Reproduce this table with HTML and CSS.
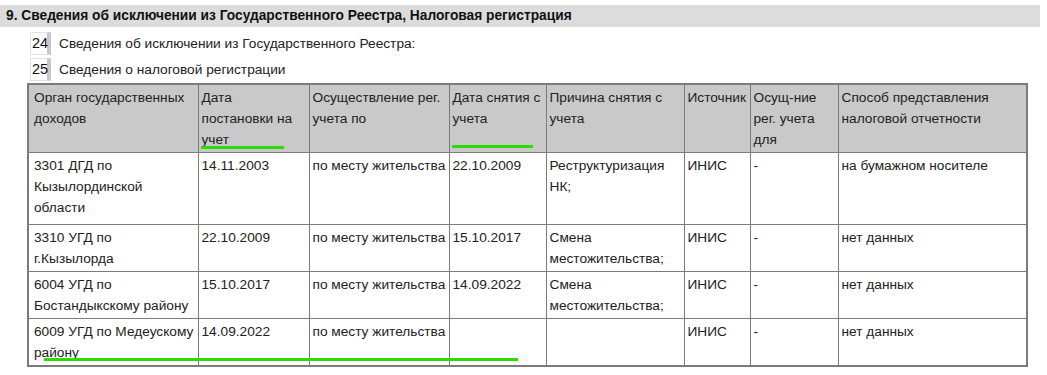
FILE: index.html
```html
<!DOCTYPE html>
<html lang="ru">
<head>
<meta charset="utf-8">
<link rel="stylesheet" href="styles.css">
</head>
<body>
<div class="page">
  <div class="section-title">9. Сведения об исключении из Государственного Реестра, Налоговая регистрация</div>
  <div class="item"><span class="num">24</span><span class="item-text">Сведения об исключении из Государственного Реестра:</span></div>
  <div class="item"><span class="num">25</span><span class="item-text">Сведения о налоговой регистрации</span></div>
  <table class="grid">
    <colgroup>
      <col class="c1"><col class="c2"><col class="c3"><col class="c4"><col class="c5"><col class="c6"><col class="c7"><col class="c8">
    </colgroup>
    <thead>
      <tr>
        <th>Орган государственных доходов</th>
        <th>Дата постановки на учет</th>
        <th>Осуществление рег. учета по</th>
        <th>Дата снятия с учета</th>
        <th>Причина снятия с учета</th>
        <th>Источник</th>
        <th>Осущ-ние рег. учета для</th>
        <th>Способ представления налоговой отчетности</th>
      </tr>
    </thead>
    <tbody>
      <tr class="tall">
        <td>3301 ДГД по Кызылординской области</td>
        <td>14.11.2003</td>
        <td>по месту жительства</td>
        <td>22.10.2009</td>
        <td>Реструктуризация НК;</td>
        <td>ИНИС</td>
        <td>-</td>
        <td>на бумажном носителе</td>
      </tr>
      <tr>
        <td>3310 УГД по г.Кызылорда</td>
        <td>22.10.2009</td>
        <td>по месту жительства</td>
        <td>15.10.2017</td>
        <td>Смена местожительства;</td>
        <td>ИНИС</td>
        <td>-</td>
        <td>нет данных</td>
      </tr>
      <tr>
        <td>6004 УГД по Бостандыкскому району</td>
        <td>15.10.2017</td>
        <td>по месту жительства</td>
        <td>14.09.2022</td>
        <td>Смена местожительства;</td>
        <td>ИНИС</td>
        <td>-</td>
        <td>нет данных</td>
      </tr>
      <tr>
        <td>6009 УГД по Медеускому району</td>
        <td>14.09.2022</td>
        <td>по месту жительства</td>
        <td></td>
        <td></td>
        <td>ИНИС</td>
        <td>-</td>
        <td>нет данных</td>
      </tr>
    </tbody>
  </table>
  <div class="mark mark-1"></div>
  <div class="mark mark-2"></div>
  <div class="mark mark-3"></div>
</div>
</body>
</html>
```

FILE: styles.css
```css
html, body {
  margin: 0;
  padding: 0;
  background: #ffffff;
}

body {
  font-family: "Liberation Sans", Arial, sans-serif;
  font-size: 13.7px;
  color: #222222;
}

.page {
  position: relative;
  padding-top: 5px;
  width: 1047px;
}

.section-title {
  width: 1034px;
  height: 22px;
  line-height: 22px;
  padding-left: 6px;
  background: #dcdcdc;
  font-weight: bold;
  font-size: 13.75px;
  color: #111111;
}

.item {
  display: flex;
  align-items: center;
  margin-left: 30px;
  height: 23px;
  margin-top: 5px;
}

.item + .item {
  margin-top: 3px;
}

.num {
  box-sizing: border-box;
  width: 21px;
  height: 23px;
  line-height: 21px;
  padding-left: 1px;
  border: 1px solid #e2e2e2;
  border-right: 4px solid #c8c8c8;
  font-size: 14.5px;
  color: #111111;
  background: #ffffff;
}

.item-text {
  margin-left: 8px;
  font-size: 13.7px;
  color: #222222;
}

.grid {
  margin-left: 27px;
  margin-top: 2px;
  width: 999px;
  table-layout: fixed;
  border-collapse: collapse;
  border: 2px solid #7b7b7b;
}

.c1 { width: 170px; }
.c2 { width: 111px; }
.c3 { width: 140px; }
.c4 { width: 97px; }
.c5 { width: 138px; }
.c6 { width: 66px; }
.c7 { width: 88px; }
.c8 { width: 189px; }

.grid th,
.grid td {
  border: 1px solid #7b7b7b;
  padding: 3px 1px 1.5px 3px;
  line-height: 20.8px;
  text-align: left;
  vertical-align: top;
  font-weight: normal;
  font-size: 13.7px;
  color: #222222;
  overflow: hidden;
}

.grid th {
  padding-bottom: 2px;
}

.grid th:first-child,
.grid td:first-child {
  padding-left: 5px;
  padding-right: 3px;
}

.grid th:nth-child(2),
.grid td:nth-child(2) {
  padding-right: 6px;
}

.grid th {
  background: #c9c9c9;
}

.grid tr.tall td {
  padding-bottom: 5px;
}

.mark {
  position: absolute;
  height: 3px;
  background: #2ddc06;
}

.mark-1 { left: 201px; top: 146px; width: 83px; }
.mark-2 { left: 452px; top: 145px; width: 81px; }
.mark-3 { left: 44px; top: 358px; width: 474px; }
```
